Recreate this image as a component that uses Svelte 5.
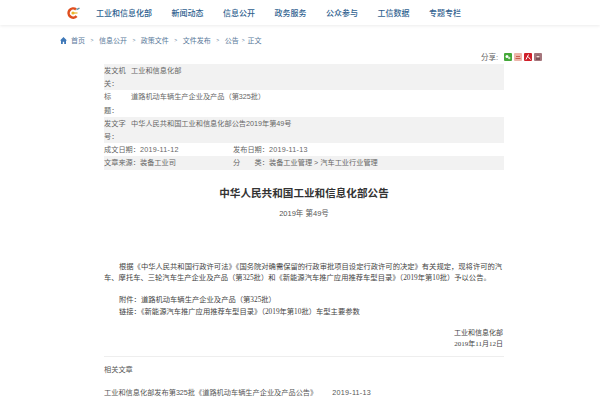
<script lang="ts">
  const navItems = ['工业和信息化部', '新闻动态', '信息公开', '政务服务', '公众参与', '工信数据', '专题专栏'];
  const crumbs = ['信息公开', '政策文件', '文件发布', '公告'];
</script>

<header class="top">
  <svg class="logo" width="13" height="12" viewBox="0 0 13 12" aria-label="logo">
    <path d="M9 2.4A4.6 4.6 0 1 0 9.6 9.2" fill="none" stroke="#df4f1f" stroke-width="2.6" />
    <circle cx="6" cy="6" r="1.6" fill="#eab52a" />
    <path d="M7 6h3.5" stroke="#eab52a" stroke-width="1.2" />
    <path d="M9.5 2.6l3 -1.4" stroke="#5d93a8" stroke-width="1.4" />
  </svg>
  <nav class="nav">
    {#each navItems as item}
      <span>{item}</span>
    {/each}
  </nav>
</header>

<main class="page">
  <div class="crumbs">
    <svg width="7" height="7" viewBox="0 0 7 7"><path d="M3.5 0L7 3.4H6V7H4.2V4.8H2.8V7H1V3.4H0z" fill="#3f78b8" /></svg>
    <span>首页</span>
    {#each crumbs as crumb}
      <span class="sep">&gt;</span><span>{crumb}</span>
    {/each}
    <span class="sep last">&gt;</span><span>正文</span>
  </div>

  <div class="share">
    <span>分享:</span>
    <svg width="8" height="8" viewBox="0 0 8 8"><rect width="8" height="8" rx="1" fill="#45a83a" /><circle cx="3" cy="3.4" r="1.5" fill="#fff" /><circle cx="5.2" cy="5" r="1.2" fill="#cfeac9" /></svg>
    <svg width="8" height="8" viewBox="0 0 8 8"><rect width="8" height="8" rx="1" fill="#eeb5aa" /><path d="M1.5 5.5h5M2 3.5h4" stroke="#c9604f" stroke-width="1" /></svg>
    <svg width="8" height="8" viewBox="0 0 8 8"><rect width="8" height="8" rx="1" fill="#d0202a" /><path d="M4.5 1.5L2 6.5M4 3.5L6.5 6.5" stroke="#fff" stroke-width="1" fill="none" /></svg>
    <svg width="8" height="8" viewBox="0 0 8 8"><rect width="8" height="8" rx="1" fill="#a5767c" /><path d="M2 7V3.4a2 2 0 0 1 4 0V7z" fill="#7d5258" /><rect x="2.5" y="2.8" width="3" height="1.6" fill="#f3dcd8" /></svg>
  </div>

  <section class="meta">
    <div class="row grey"><span class="label">发文机关：</span><span class="val">工业和信息化部</span></div>
    <div class="row"><span class="label">标　　题：</span><span class="val">道路机动车辆生产企业及产品（第325批）</span></div>
    <div class="row grey"><span class="label">发文字号：</span><span class="val">中华人民共和国工业和信息化部公告2019年第49号</span></div>
    <div class="row single">
      <span class="half">成文日期：<span class="num">2019-11-12</span></span>
      <span>发布日期：<span class="num">2019-11-13</span></span>
    </div>
    <div class="row single grey">
      <span class="half">文章来源：装备工业司</span>
      <span>分　　类：装备工业管理 &gt; 汽车工业行业管理</span>
    </div>
  </section>

  <h1>中华人民共和国工业和信息化部公告</h1>
  <p class="issue">2019年 第49号</p>

  <article class="body">
    <p class="indent lead">根据《中华人民共和国行政许可法》《国务院对确需保留的行政审批项目设定行政许可的决定》有关规定，现将许可的汽车、摩托车、三轮汽车生产企业及产品（第325批）和《新能源汽车推广应用推荐车型目录》（2019年第10批）予以公告。</p>
    <p class="indent attach">附件：道路机动车辆生产企业及产品（第325批）</p>
    <p class="indent">链接：《新能源汽车推广应用推荐车型目录》（2019年第10批）车型主要参数</p>
    <div class="sign">
      <div>工业和信息化部</div>
      <div>2019年11月12日</div>
    </div>
  </article>

  <section class="related">
    <h2>相关文章</h2>
    <p><span class="link">工业和信息化部发布第325批《道路机动车辆生产企业及产品公告》</span><span class="num">2019-11-13</span></p>
  </section>
</main>

<style>
  :global(body) {
    margin: 0;
    background: #fff;
    overflow: hidden;
    font-family: "Liberation Sans", "Noto Sans CJK SC", sans-serif;
    color: #555;
  }

  .top {
    display: flex;
    align-items: center;
    height: 25px;
    padding-left: 67px;
    box-shadow: 0 1px 3px rgba(0, 0, 0, 0.08);
  }

  .logo {
    margin-right: 16px;
  }

  .nav {
    display: flex;
    gap: 19.5px;
    font-size: 8px;
    color: #2f5f8f;
    font-weight: 500;
  }

  .page {
    padding: 0 96px 0 104px;
  }

  .crumbs {
    display: flex;
    align-items: center;
    height: 10px;
    margin: 10px 0 0 -44px;
    font-size: 7px;
    color: #5a7a9a;
  }

  .crumbs svg {
    margin-right: 4px;
  }

  .sep {
    margin: 0 5.5px;
    font-size: 5px;
  }

  .sep.last {
    margin: 0 3px;
  }

  .share {
    display: flex;
    justify-content: flex-end;
    align-items: center;
    gap: 2px;
    margin: 6.5px -38px 0 0;
    height: 10px;
    font-size: 7.5px;
    color: #666;
  }

  .share span {
    margin-right: 4px;
  }

  .meta {
    margin-top: 2.5px;
    font-size: 7.2px;
    color: #666;
  }

  .row {
    display: flex;
    line-height: 13.2px;
  }

  .grey {
    background: #f2f2f2;
  }

  .label {
    width: 22px;
    flex: none;
    word-break: break-all;
  }

  .val {
    margin-left: 5px;
  }

  .half {
    width: 129px;
  }

  .num {
    letter-spacing: 0.25px;
  }

  h1 {
    margin: 16px 0 0;
    text-align: center;
    font-size: 10.6px;
    line-height: 14px;
    color: #333;
  }

  .issue {
    margin: 8px 0 0;
    text-align: center;
    font-size: 7.5px;
    line-height: 12px;
  }

  .body {
    margin-top: 41.5px;
    font-size: 7.3px;
    line-height: 12px;
    font-family: "Liberation Serif", "Noto Sans CJK SC", serif;
    color: #444;
  }

  .body p {
    margin: 0;
  }

  .body .lead {
    line-height: 11px;
  }

  .indent {
    text-indent: 15px;
  }

  .body .attach {
    margin-top: 10.5px;
  }

  .sign {
    margin-top: 10px;
    padding-right: 1px;
    text-align: right;
    font-size: 7px;
    line-height: 11.5px;
  }

  .related {
    margin-top: 5px;
    border-top: 1px solid #eee;
    font-size: 7.2px;
  }

  h2 {
    margin: 7px 0 0;
    font-size: 7.2px;
    font-weight: normal;
    line-height: 12px;
  }

  .related p {
    margin: 11px 0 0;
    line-height: 12px;
  }

  .link {
    margin-right: 15px;
  }
</style>
